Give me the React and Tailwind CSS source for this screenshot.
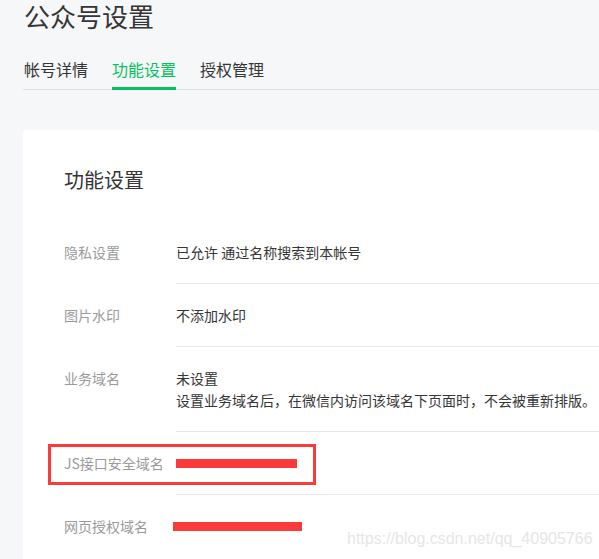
const font = {
  fontFamily: '"Noto Sans CJK SC", "Noto Sans", sans-serif',
};

function Row({ label, children, last, mark }) {
  return (
    <div className="relative flex">
      <div className="w-[112px] shrink-0 py-[20px] text-[14px] leading-[22px] text-[#9a9a9a]">
        {label}
      </div>
      <div
        className={
          "flex-1 py-[20px] text-[14px] leading-[22px] text-[#353535] " +
          (last ? "" : "border-b border-[#e7e7eb]")
        }
      >
        {children}
      </div>
      {mark && (
        <div className="absolute left-[-16px] top-[12px] h-[41px] w-[268px] border-[3px] border-[#fd3a3a]" />
      )}
    </div>
  );
}

function Redact({ w, ml = 0 }) {
  return (
    <div className="flex h-[22px] items-center">
      <div
        className="h-[9px] bg-[#fd3a3a]"
        style={{ width: w, marginLeft: ml }}
      />
    </div>
  );
}

export default function App() {
  return (
    <div
      className="relative h-[559px] w-[599px] overflow-hidden bg-[#f6f7f9]"
      style={font}
    >
      <div className="pl-[24px]">
        <h1 className="pt-[1px] text-[26px] leading-[30px] text-[#353535]">
          公众号设置
        </h1>
        <div className="mt-[26px] ml-[-1px] flex gap-[24px] border-b border-[#dfe0e4] pl-[1px] text-[16px]">
          <div className="pb-[8px] leading-[24px] text-[#353535]">帐号详情</div>
          <div className="-mb-px border-b-[3px] border-[#07c160] pb-[6px] leading-[24px] text-[#07c160]">
            功能设置
          </div>
          <div className="pb-[8px] leading-[24px] text-[#353535]">授权管理</div>
        </div>
      </div>

      <div className="ml-[23px] mt-[40px] rounded-[4px] bg-white pb-[40px] pl-[41px] pt-[36px]">
        <h2 className="text-[20px] leading-[28px] text-[#353535]">功能设置</h2>
        <div className="mt-[27px]">
          <Row label="隐私设置">已允许 通过名称搜索到本帐号</Row>
          <Row label="图片水印">不添加水印</Row>
          <Row label="业务域名">
            <div>未设置</div>
            <div>设置业务域名后，在微信内访问该域名下页面时，不会被重新排版。</div>
          </Row>
          <Row label="JS接口安全域名" mark>
            <Redact w={121} />
          </Row>
          <Row label="网页授权域名" last>
            <Redact w={129} ml={-3} />
          </Row>
        </div>
      </div>

      <div
        className="absolute left-[347px] top-[529px] text-[16px] leading-[20px] text-[#e6e6e6]"
        style={{ fontFamily: '"Liberation Sans", Arial, sans-serif' }}
      >
        https://blog.csdn.net/qq_40905766
      </div>
    </div>
  );
}
